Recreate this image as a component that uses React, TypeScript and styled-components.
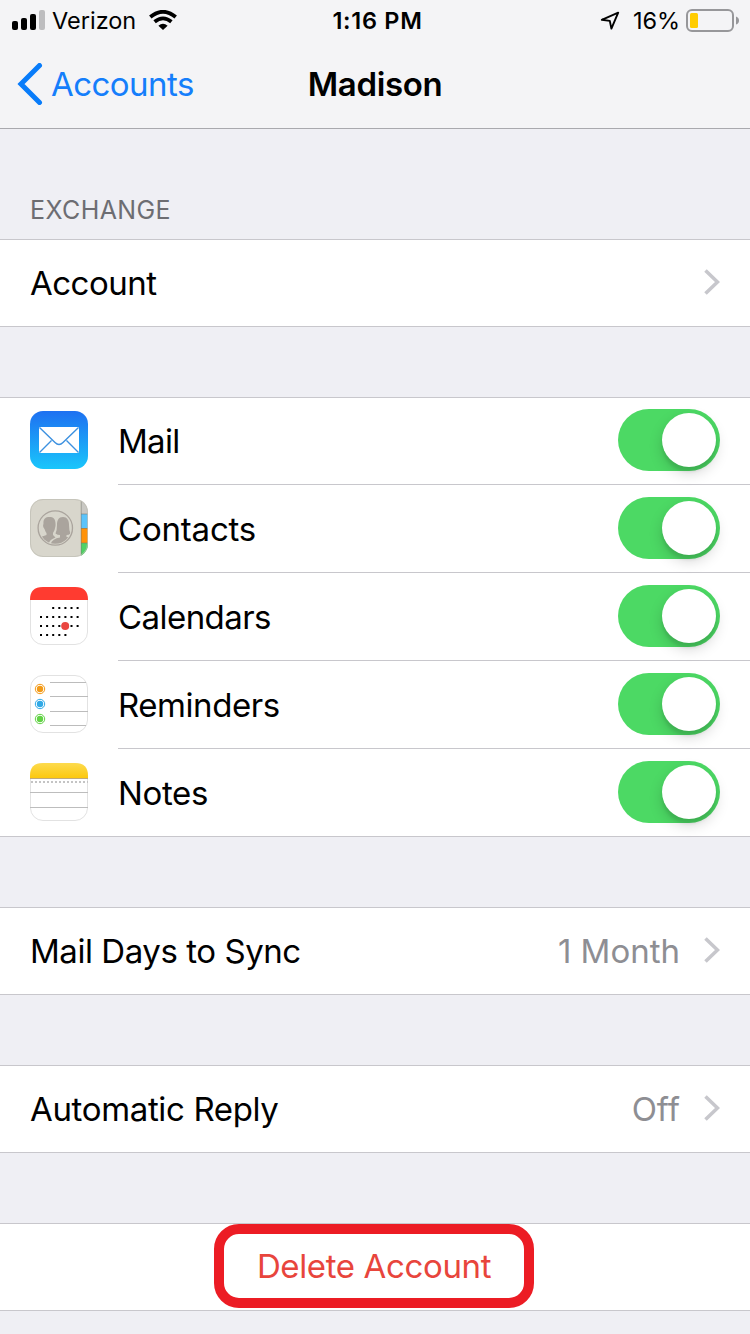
import React from "react";
import styled, { createGlobalStyle } from "styled-components";

const GlobalStyle = createGlobalStyle`
  * { box-sizing: border-box; }
  body {
    margin: 0;
    background: #efeff4;
    font-family: Inter, "Liberation Sans", sans-serif;
    color: #000;
  }
`;

const Screen = styled.main`
  width: 750px;
  height: 1334px;
  overflow: hidden;
  background: #efeff4;
`;

const Header = styled.header`
  height: 129px;
  background: #f4f4f6;
  border-bottom: 1px solid #a9a9ae;
`;

const StatusBar = styled.div`
  height: 40px;
  display: grid;
  grid-template: 40px / 1fr auto 1fr;
  align-items: center;
  line-height: 36px;
`;

const StatusSide = styled.div<{ $end?: boolean }>`
  height: 40px;
  display: flex;
  align-items: center;
  justify-content: ${(p) => (p.$end ? "flex-end" : "flex-start")};
  padding: ${(p) => (p.$end ? "0 11px 0 0" : "0 0 0 12px")};
`;

const Carrier = styled.div`
  padding: 4px 13px 0 7px;
`;

const Percent = styled.div`
  padding: 4px 6px 0 13px;
`;

const Clock = styled.div`
  padding: 4px 0 0 5px;
`;

const Label = styled.span<{
  $size?: number;
  $weight?: number;
  $track?: number;
  $color?: string;
}>`
  font-size: ${(p) => p.$size ?? 33}px;
  font-weight: ${(p) => p.$weight ?? 400};
  letter-spacing: ${(p) => p.$track ?? 0}px;
  color: ${(p) => p.$color ?? "#000"};
  white-space: nowrap;
`;

const NavBar = styled.nav`
  height: 88px;
  display: grid;
  grid-template-columns: 1fr auto 1fr;
  align-items: center;
  line-height: 88px;
`;

const BackButton = styled.a`
  display: flex;
  align-items: center;
  gap: 8px;
  padding-left: 17px;
`;

const SectionTitle = styled.h2`
  margin: 0;
  height: 110px;
  padding: 61px 30px 0;
  line-height: 40px;
  font-weight: 400;
`;

const Group = styled.section`
  margin-bottom: 70px;
  background: #fff;
  border-bottom: 1px solid #c8c7cc;
  box-shadow: inset 0 1px #c8c7cc;
`;

const Row = styled.div<{ $center?: boolean }>`
  height: 88px;
  display: flex;
  align-items: stretch;
  justify-content: ${(p) => (p.$center ? "center" : "flex-start")};
  padding-left: ${(p) => (p.$center ? 0 : 30)}px;
  &:last-child { height: 87px; }
`;

const RowIcon = styled.svg`
  flex: none;
  width: 58px;
  height: 58px;
  margin: 14px 30px 0 0;
`;

const RowBody = styled.div`
  flex: 1;
  display: flex;
  align-items: center;
  justify-content: space-between;
  padding-right: 30px;
  line-height: 86px;
  border-bottom: 1px solid #c8c7cc;
  ${Row}:last-child > & { border-bottom: 0; }
`;

const Detail = styled.div`
  display: flex;
  align-items: center;
  gap: 24px;
`;

const Switch = styled.div`
  width: 102px;
  height: 62px;
  margin-bottom: 2px;
  padding: 4px;
  display: flex;
  justify-content: flex-end;
  border-radius: 31px;
  background: #4cd964;
`;

const Knob = styled.div`
  width: 54px;
  height: 54px;
  border-radius: 50%;
  background: #fff;
  box-shadow: 0 6px 14px rgba(0, 0, 0, 0.17), 0 5px 3px rgba(0, 0, 0, 0.07);
`;

const DeleteFrame = styled.div`
  width: 320px;
  height: 84px;
  margin: 1px 2px 0 0;
  border: 10px solid #ec1c24;
  border-radius: 25px;
  display: flex;
  align-items: center;
  justify-content: center;
  line-height: 64px;
`;

const ChevronIcon = styled.svg`
  width: 16px;
  height: 26px;
  margin-bottom: 2px;
`;

const Chevron = () => (
  <ChevronIcon viewBox="0 0 16 26" fill="none">
    <path d="M1.5 1.5 13.5 13 1.5 24.5" stroke="#c7c7cc" strokeWidth="3.6" />
  </ChevronIcon>
);

const Signal = () => (
  <svg width="33" height="20" viewBox="0 0 33 20">
    <rect x="0" y="11" width="6" height="9" rx="2" />
    <rect x="9" y="8" width="6" height="12" rx="2" />
    <rect x="18" y="4" width="6" height="16" rx="2" />
    <rect x="27" y="0" width="6" height="20" rx="2" fill="#bdbdbf" />
  </svg>
);

const Wifi = () => (
  <svg width="28" height="20" viewBox="0 0 28 20" fill="none" stroke="#000" strokeWidth="3.8">
    <path d="M1.3 7Q14-3.4 26.7 7" />
    <path d="M5.6 11.8Q14 5 22.4 11.8" />
    <path d="M9.4 15.7Q14 12 18.6 15.7L14 20Z" fill="#000" stroke="none" />
  </svg>
);

const LocationArrow = () => (
  <svg width="20" height="20" viewBox="0 0 20 20" fill="none">
    <path d="M1.8 9.8 18.2 2.7 11.4 18.6 9.8 10.9Z" stroke="#000" strokeWidth="1.9" strokeLinejoin="round" />
  </svg>
);

const Battery = () => (
  <svg width="53" height="24" viewBox="0 0 53 24">
    <rect x="1" y="2" width="46" height="21" rx="5" fill="none" stroke="#97979a" strokeWidth="2" />
    <rect x="4" y="5" width="8" height="15" rx="1.5" fill="#fc0" />
    <path d="M50 8.5Q53 9.5 53 12.5T50 16.5Z" fill="#97979a" />
  </svg>
);

const MailIcon = () => (
  <RowIcon viewBox="0 0 58 58">
    <defs>
      <linearGradient id="mail" x2="0" y2="1">
        <stop stopColor="#1e70f1" />
        <stop offset="1" stopColor="#1ac6fb" />
      </linearGradient>
    </defs>
    <rect width="58" height="58" rx="13" fill="url(#mail)" />
    <rect x="9" y="16" width="40" height="26" rx="1" fill="#fff" />
    <path
      d="M9.5 16.5 25 31.5Q29 35.5 33 31.5L48.5 16.5M9.5 41.5 21.5 29.5M48.5 41.5 36.5 29.5"
      fill="none"
      stroke="#3d91e0"
      strokeWidth="1.4"
    />
  </RowIcon>
);

const ContactsIcon = () => (
  <RowIcon viewBox="0 0 58 58">
    <clipPath id="card"><rect width="58" height="58" rx="13" /></clipPath>
    <clipPath id="badge"><circle cx="25.3" cy="29" r="15.8" /></clipPath>
    <g clipPath="url(#card)">
      <rect width="58" height="58" fill="#d8d6cc" />
      <rect x="51" width="7" height="15" fill="#c9c8c3" />
      <rect x="51" y="15" width="7" height="14" fill="#5ac3fa" />
      <rect x="51" y="29" width="7" height="15" fill="#ff9208" />
      <rect x="51" y="44" width="7" height="14" fill="#4fd265" />
      <path d="M51.2 0V58M51 15H58M51 29.5H58M51 44H58" stroke="#77766e" strokeOpacity=".55" />
    </g>
    <circle cx="25.3" cy="29" r="17.2" fill="none" stroke="#aaa49d" strokeWidth="1.3" />
    <g clipPath="url(#badge)" fill="#aaa49d">
      <path d="M19.5 18C15 18 13 20.5 13.5 25C12.5 26.5 13.5 29 14.5 30Q15.5 33 16.5 34V36Q9 38 7 42L12 48H18Q18 41 25.5 38.5L23 36V34Q25 31 25.5 27C26 20 23.5 18 19.5 18Z" />
      <path d="M33 18C28.5 18 27 21.5 27 26Q27 31.5 25.5 34.5Q27.5 36 30 36V38.5Q20.5 40 20 48H36L45 40Q42 38.5 36.5 38V36Q39 36 40.5 34.5Q39 31.5 39 26C39 21 37 18 33 18Z" />
    </g>
    <rect x=".5" y=".5" width="57" height="57" rx="12.5" fill="none" stroke="#bfbdb4" strokeOpacity=".7" />
  </RowIcon>
);

const dotRows = [
  { y: 21, from: 2, to: 6 },
  { y: 30, from: 0, to: 6 },
  { y: 39, from: 0, to: 6 },
  { y: 48, from: 0, to: 4 },
];

const CalendarIcon = () => (
  <RowIcon viewBox="0 0 58 58">
    <rect x=".5" y=".5" width="57" height="57" rx="12.5" fill="#fff" stroke="#e2e2e2" />
    <path d="M0 13C0 4 4 0 13 0H45C54 0 58 4 58 13Z" fill="#ff3b30" />
    {dotRows.map((r) =>
      Array.from({ length: r.to - r.from + 1 }, (_, i) => (
        <rect key={`${r.y}-${i}`} x={10 + (r.from + i) * 6.1} y={r.y - 1} width="2" height="2" />
      ))
    )}
    <circle cx="35.2" cy="39" r="4" fill="#ea4640" />
  </RowIcon>
);

const RemindersIcon = () => (
  <RowIcon viewBox="0 0 58 58">
    <rect x=".5" y=".5" width="57" height="57" rx="12.5" fill="#fff" stroke="#e2e2e2" />
    <path d="M20 7.5H56M20 21.5H58M20 36.5H58M20 50.5H56" stroke="#bcbcbc" />
    {["#f39a17", "#30a9e6", "#62d245"].map((color, i) => (
      <g key={color}>
        <circle cx="10" cy={14 + i * 15} r="4.7" fill="none" stroke={color} />
        <circle cx="10" cy={14 + i * 15} r="3.2" fill={color} />
      </g>
    ))}
  </RowIcon>
);

const NotesIcon = () => (
  <RowIcon viewBox="0 0 58 58">
    <defs>
      <linearGradient id="pad" x2="0" y2="1">
        <stop stopColor="#fddb4e" />
        <stop offset="1" stopColor="#fcc80f" />
      </linearGradient>
    </defs>
    <rect x=".5" y=".5" width="57" height="57" rx="12.5" fill="#fff" stroke="#e2e2e2" />
    <path d="M0 15V13C0 4 4 0 13 0H45C54 0 58 4 58 13V15Z" fill="url(#pad)" />
    <path d="M0 15.5H58" stroke="#c0a97a" />
    <path d="M1 19H58" stroke="#c4c4c4" strokeWidth="1.8" strokeDasharray="2 2" />
    <path d="M0 29.5H58M0 44.5H58" stroke="#bdbdbd" />
  </RowIcon>
);

const services = [
  { name: "Mail", track: -0.7, Icon: MailIcon },
  { name: "Contacts", track: -0.2, Icon: ContactsIcon },
  { name: "Calendars", track: -0.55, Icon: CalendarIcon },
  { name: "Reminders", track: -0.45, Icon: RemindersIcon },
  { name: "Notes", track: -0.35, Icon: NotesIcon },
];

export default function App() {
  return (
    <Screen>
      <GlobalStyle />
      <Header>
        <StatusBar>
          <StatusSide>
            <Signal />
            <Carrier><Label $size={23.5}>Verizon</Label></Carrier>
            <Wifi />
          </StatusSide>
          <Clock><Label $size={23.5} $weight={600} $track={0.7}>1:16 PM</Label></Clock>
          <StatusSide $end>
            <LocationArrow />
            <Percent><Label $size={23.5} $track={-0.1}>16%</Label></Percent>
            <Battery />
          </StatusSide>
        </StatusBar>
        <NavBar>
          <BackButton>
            <svg width="26" height="42" viewBox="0 0 26 42" fill="none">
              <path d="M22.5 2.5 4 21 22.5 39.5" stroke="#087cfa" strokeWidth="5" strokeLinecap="round" />
            </svg>
            <Label $color="#157efb" $track={-0.55}>Accounts</Label>
          </BackButton>
          <Label $weight={600} $track={-0.35}>Madison</Label>
        </NavBar>
      </Header>
      <SectionTitle><Label $size={25} $track={0.4} $color="#6d6d72">EXCHANGE</Label></SectionTitle>
      <Group>
        <Row><RowBody><Label $track={-0.5}>Account</Label><Chevron /></RowBody></Row>
      </Group>
      <Group>
        {services.map(({ name, track, Icon }) => (
          <Row key={name}>
            <Icon />
            <RowBody>
              <Label $track={track}>{name}</Label>
              <Switch><Knob /></Switch>
            </RowBody>
          </Row>
        ))}
      </Group>
      <Group>
        <Row>
          <RowBody>
            <Label $track={-0.45}>Mail Days to Sync</Label>
            <Detail><Label $color="#8e8e93">1 Month</Label><Chevron /></Detail>
          </RowBody>
        </Row>
      </Group>
      <Group>
        <Row>
          <RowBody>
            <Label $track={-0.35}>Automatic Reply</Label>
            <Detail><Label $color="#8e8e93">Off</Label><Chevron /></Detail>
          </RowBody>
        </Row>
      </Group>
      <Group>
        <Row $center>
          <DeleteFrame><Label $track={-0.37} $color="#e8453c">Delete Account</Label></DeleteFrame>
        </Row>
      </Group>
    </Screen>
  );
}
